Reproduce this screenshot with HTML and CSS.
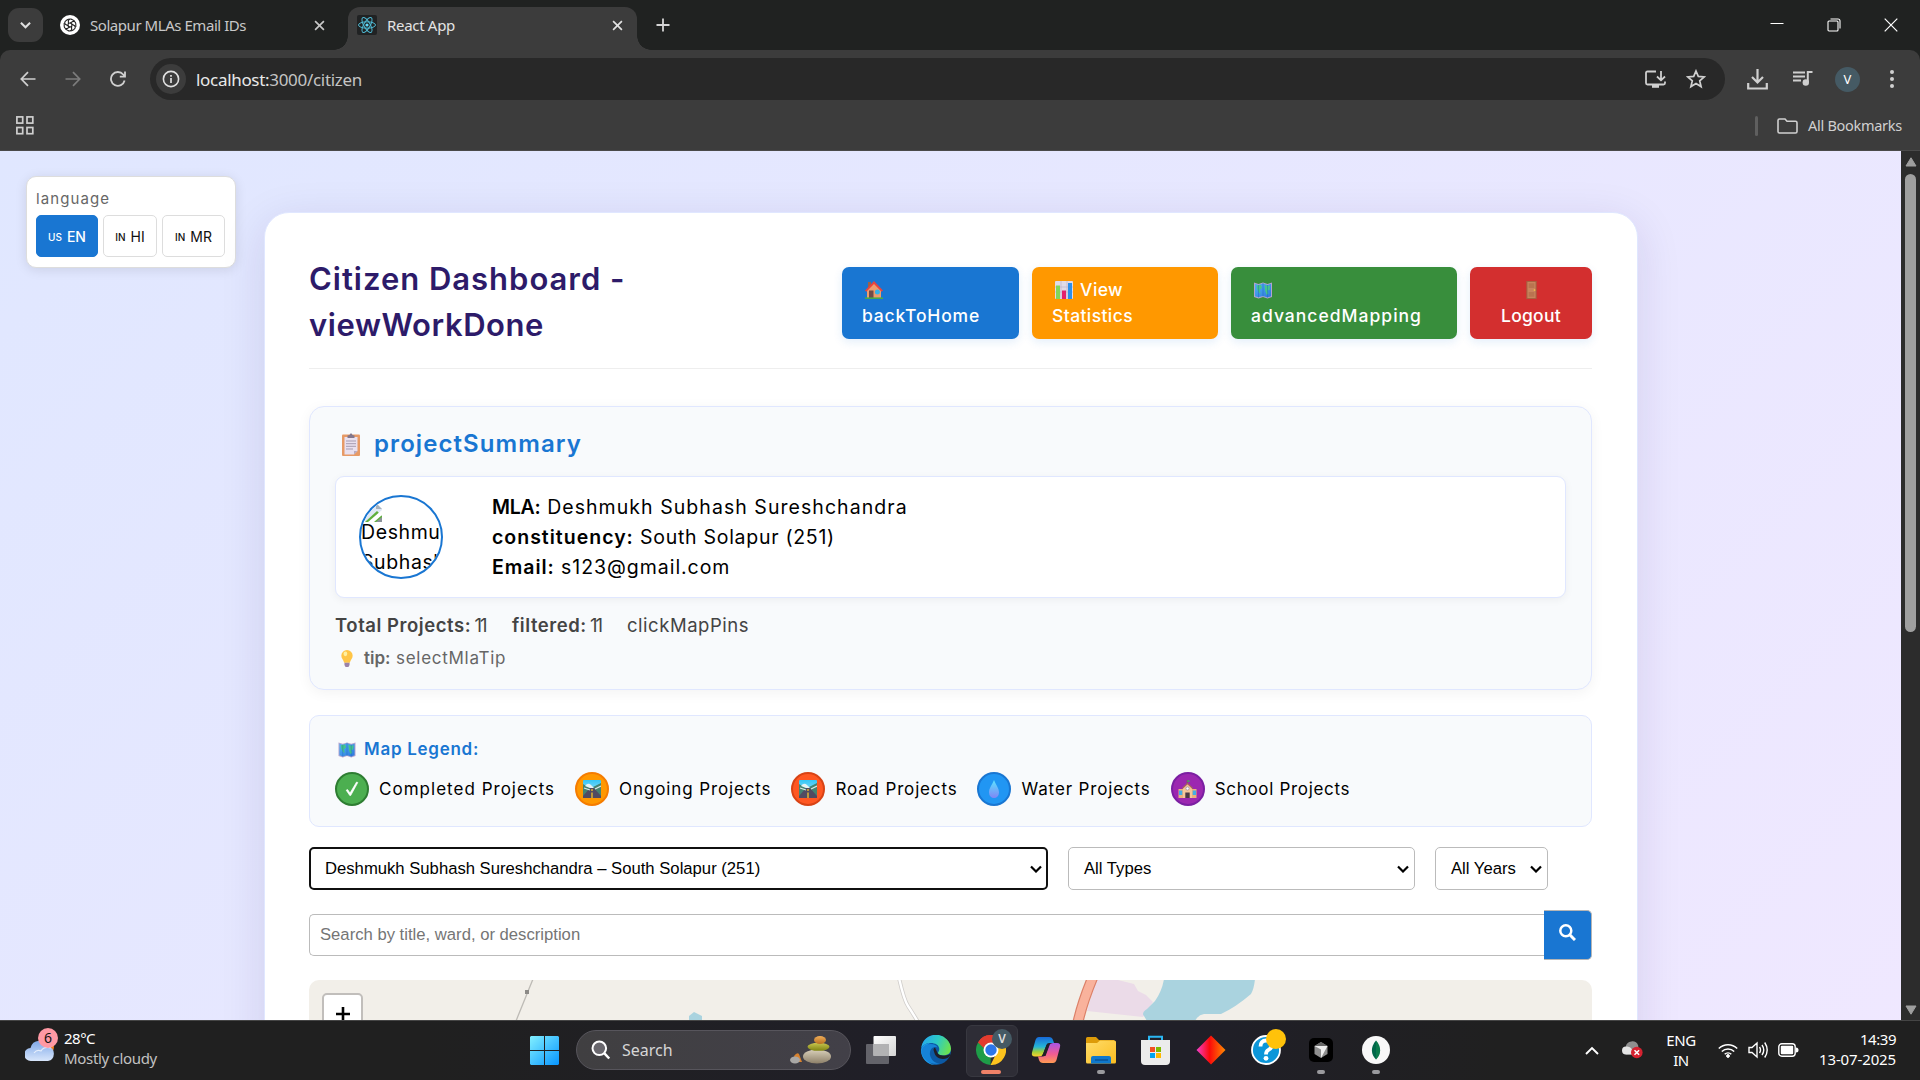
FILE: index.html
```html
<!DOCTYPE html>
<html lang="en">
<head>
<meta charset="utf-8">
<title>React App</title>
<link rel="stylesheet" href="styles.css">
</head>
<body>
<svg class="defs" width="0" height="0" aria-hidden="true">
  <defs>
    <linearGradient id="gDrop" x1="0" y1="0" x2="0" y2="1"><stop offset="0" stop-color="#5de4ff"/><stop offset="1" stop-color="#7f86f5"/></linearGradient>
    <linearGradient id="gMap" x1="0" y1="0" x2="1" y2="1"><stop offset="0" stop-color="#4fb2f5"/><stop offset="1" stop-color="#2f78dc"/></linearGradient>
    <linearGradient id="gSky" x1="0" y1="0" x2="0" y2="1"><stop offset="0" stop-color="#33c6f7"/><stop offset="1" stop-color="#bfeaf6"/></linearGradient>
    <symbol id="map" viewBox="0 0 18 18"><path d="M0 1.5 4.5 3 9 1.5 13.500 3 18 1.500V16l-4.500 1.500L9 16l-4.500 1.500L0 16z" fill="#b3a3cf"/><path d="M1 2.800 4.500 4 9 2.500 13.500 4 17 2.800V15.200l-3.500 1.200L9 15l-4.500 1.300L1 15.200z" fill="url(#gMap)"/><path d="M2.500 4.500 7 3.800 8 7 5.800 8.800 6.500 13 4.500 11 3 8z M10.500 4l3.200 1L16 4.500 15.500 9l-2 .5 1 3-1.800 1.500-1.500-4z" fill="#45c58b"/><path d="M9 2v13.500M4.500 4v12.500M13.500 4v12.500" stroke="#1e62b8" stroke-width=".7" opacity=".6"/></symbol>
    <symbol id="road" viewBox="0 0 18 18"><rect width="18" height="18" rx="1" fill="url(#gSky)"/><path d="M0 4l5 3 3 1 10-5v15H0z" fill="#448472"/><path d="M2 6q3-4 6-1l3 3H7z" fill="#e8f3f4"/><path d="M7 8h4l7 8v2H0v-2z" fill="#514b62"/><path d="M18 6l-6 3M1 8l6 2" stroke="#dbe9e7" stroke-width="1.200"/><path d="M9 9v2M9 12.500V18" stroke="#f6c22c" stroke-width="1.300"/></symbol>
    <symbol id="house" viewBox="0 0 18 19"><path d="M3 2h3v5H3z" fill="#9d6048"/><path d="M2 9.500 9 3l7 6.500V18H2z" fill="#ee9d6d"/><path d="M0 10.500 9 1l9 9.500-1.400 1.200L9 4 1.300 11.700z" fill="#e8443e"/><path d="M4 10.500h4.500V18H4z" fill="#714b48"/><circle cx="12.400" cy="12" r="2.500" fill="#35b2e9"/><path d="M0 17.400h18V19H0z" fill="#47a94a"/></symbol>
    <symbol id="chart" viewBox="0 0 18 18"><rect width="18" height="18" rx="1" fill="#e0dbe8"/><path d="M0 6h18M0 11h18M6 0v18M12 0v18" stroke="#bdb4cc" stroke-width=".7"/><path d="M1 4.500h4V18H1z" fill="#82d65a"/><path d="M7 9.500h4V18H7z" fill="#e4206d"/><path d="M13 2h4v16h-4z" fill="#2b8fec"/></symbol>
    <symbol id="door" viewBox="0 0 11 19"><path d="M0 0h11v19H0z" fill="#a76140"/><path d="M1.200 1h8.600v17H1.200z" fill="#c8845d"/><path d="M2.500 2.500h6v5h-6zM2.500 11.500h6v5h-6z" fill="#b97450"/><circle cx="8.700" cy="9.500" r=".9" fill="#fac844"/></symbol>
    <symbol id="clip" viewBox="0 0 18 23"><rect y="1.500" width="18" height="21.500" rx="1" fill="#e79a66"/><path d="M2.500 4h13v14l-3.500 3.500H2.500z" fill="#e9e0ef"/><path d="M15.500 18l-3.500 3.500V18z" fill="#b9aabf"/><path d="M5.500 5V2.500L7.500 2Q9-1.500 10.500 2l2 .5V5z" fill="#83778c"/><path d="M4 8h10M4 10.700h10M4 13.300h10M4 16h7" stroke="#a59bb0" stroke-width="1"/></symbol>
    <symbol id="bulb" viewBox="0 0 12 18"><path d="M6 0a6 6 0 0 1 6 6c0 3-2.500 4.500-3 7.500H3C2.500 10.500 0 9 0 6a6 6 0 0 1 6-6z" fill="#ffc546"/><ellipse cx="4.300" cy="4" rx="2" ry="2.500" fill="#fff0a0"/><path d="M3.300 13.500h5.400V16L7.500 18h-3L3.300 16z" fill="#9b82a8"/></symbol>
    <symbol id="school" viewBox="0 0 18 18"><path d="M8.700 0v5" stroke="#8a5b4d"/><path d="M9 0l3 1-3 1.300z" fill="#36b35c"/><path d="M0 9h18v9H0z" fill="#ecb07c"/><path d="M4.500 8 9 4l4.500 4v10h-9z" fill="#f6c699"/><path d="M3.800 8.500 9 3.500l5.200 5" fill="none" stroke="#a7665b" stroke-width="1.100"/><circle cx="9" cy="8.500" r="1.600" fill="#fff" stroke="#7e80a0" stroke-width=".6"/><path d="M.5 10.500h3.300V15H.5zM14.200 10.500h3.300V15h-3.300z" fill="#46aee4"/><path d="M6.800 12.500h4.400V18H6.800z" fill="#4d3944"/></symbol>
    <symbol id="drop" viewBox="0 0 10 18"><path d="M5 0c2 5 5 8 5 12.500a5 5.500 0 0 1-10 0C0 8 3 5 5 0z" fill="url(#gDrop)"/></symbol>
    <symbol id="chev" viewBox="0 0 12 8"><path d="M1 1.500 6 6.500 11 1.500" fill="none" stroke="currentColor" stroke-width="2.200"/></symbol>
    <symbol id="x" viewBox="0 0 12 12"><path d="M1.200 1.200 10.800 10.800M10.800 1.200 1.200 10.800" fill="none" stroke="currentColor" stroke-width="1.800"/></symbol>
  </defs>
</svg>

<div class="screen">
  <header class="tabstrip">
    <div class="tabsearch"><svg width="11" height="8"><use href="#chev"/></svg></div>
    <div class="tab tab-idle">
      <svg class="favicon" width="20" height="20" viewBox="0 0 20 20"><circle cx="10" cy="10" r="10" fill="#fff"/><g fill="none" stroke="#222" stroke-width="1.100"><path id="pet" d="M10 8.200 13 6.400Q15.500 6 15.800 8.800V12"/><use href="#pet" transform="rotate(60 10 10)"/><use href="#pet" transform="rotate(120 10 10)"/><use href="#pet" transform="rotate(180 10 10)"/><use href="#pet" transform="rotate(240 10 10)"/><use href="#pet" transform="rotate(300 10 10)"/><circle cx="10" cy="10" r="2"/></g></svg>
      <span class="tabtext t-sol">Solapur MLAs Email IDs</span>
      <svg class="tabclose" width="11" height="11"><use href="#x"/></svg>
    </div>
    <div class="tab tab-active">
      <svg class="favicon" width="20" height="20" viewBox="0 0 20 20"><rect width="20" height="20" rx="2" fill="#202223"/><g fill="none" stroke="#4fb9d3" stroke-width="1"><ellipse cx="10" cy="10" rx="8.500" ry="3.200"/><ellipse cx="10" cy="10" rx="8.500" ry="3.200" transform="rotate(60 10 10)"/><ellipse cx="10" cy="10" rx="8.500" ry="3.200" transform="rotate(120 10 10)"/></g><circle cx="10" cy="10" r="1.600" fill="#61dafb"/></svg>
      <span class="tabtext t-react">React App</span>
      <svg class="tabclose" width="11" height="11"><use href="#x"/></svg>
    </div>
    <svg class="newtab" width="14" height="14" viewBox="0 0 14 14"><path d="M7 .5v13M.5 7h13" stroke="#d5d5d5" stroke-width="1.800"/></svg>
    <div class="winbtns">
      <svg width="14" height="14" viewBox="0 0 14 14"><path d="M.5 5.500h13" stroke="#fff" stroke-width="1"/></svg>
      <svg width="14" height="14" viewBox="0 0 14 14" fill="none" stroke="#fff" stroke-width="1.100"><rect x="1" y="3" width="10" height="10" rx="1"/><path d="M3.500 1h7.500q2 0 2 2v7.500"/></svg>
      <svg width="14" height="14" viewBox="0 0 14 14"><path d="M.7 .7l12.600 12.600M13.300 .7.7 13.300" stroke="#fff" stroke-width="1.200"/></svg>
    </div>
  </header>

  <nav class="toolbar">
    <svg class="nav" width="16" height="16" viewBox="0 0 16 16" fill="none" stroke="#d0d0d0" stroke-width="1.700"><path d="M15.500 8H1.500M8 1.200 1.300 8 8 14.800"/></svg>
    <svg class="nav" width="16" height="16" viewBox="0 0 16 16" fill="none" stroke="#7c7c7c" stroke-width="1.700"><path d="M.5 8h14M8 1.200 14.700 8 8 14.800"/></svg>
    <svg class="nav" width="16" height="16" viewBox="0 0 16 16" fill="none" stroke="#d0d0d0" stroke-width="1.800"><path d="M14.600 9.500A6.900 6.900 0 1 1 13.200 3.500L14.500 5M15 .5v5.200H9.800"/></svg>
    <div class="omnibox">
      <span class="info"><svg width="18" height="18" viewBox="0 0 18 18"><circle cx="9" cy="9" r="7.600" fill="none" stroke="#e0e0e0" stroke-width="1.600"/><path d="M9 8v5M9 5v1.800" stroke="#e0e0e0" stroke-width="1.700"/></svg></span>
      <span class="url"><b>localhost:</b>3000/citizen</span>
      <svg class="install" width="21" height="19" viewBox="0 0 21 19" fill="none" stroke="#cfcfcf" stroke-width="1.800"><path d="M11 1.500H2.500q-1.500 0-1.500 1.500V13q0 1.500 1.500 1.500h16q1.500 0 1.500-1.500v-1.500M16 1v9M12 6.500l4 3.800 4-3.800"/><path d="M7 16.300h7" stroke-width="3"/></svg>
      <svg width="20" height="20" viewBox="0 0 20 20"><path d="M10 2l2.300 5.400 5.900.5-4.500 3.900 1.400 5.800L10 14.500l-5.100 3.100 1.400-5.800L1.800 7.900l5.900-.5z" fill="none" stroke="#d0d0d0" stroke-width="1.700"/></svg>
    </div>
    <svg class="dl" width="21" height="21" viewBox="0 0 21 21" fill="none" stroke="#d0d0d0" stroke-width="2.200"><path d="M10.500 0v13M5 8l5.500 5.500L16 8M1.200 14v5.500h18.600V14"/></svg>
    <svg class="music" width="20" height="18" viewBox="0 0 20 18"><path d="M0 2.500h12M0 6.500h12M0 10.500h8" stroke="#cfcfcf" stroke-width="1.800"/><path d="M14.800 12V2h4.700" fill="none" stroke="#cfcfcf" stroke-width="2"/><circle cx="12.800" cy="12.500" r="3.200" fill="#cfcfcf"/></svg>
    <span class="profile">V</span>
    <svg class="kebab" width="4" height="18" viewBox="0 0 4 18" fill="#d0d0d0"><circle cx="2" cy="2" r="2"/><circle cx="2" cy="9" r="2"/><circle cx="2" cy="16" r="2"/></svg>
  </nav>

  <div class="bookmarks">
    <svg width="18" height="19" viewBox="0 0 18 19" fill="none" stroke="#cfcfcf" stroke-width="1.700"><rect x=".9" y=".9" width="5.800" height="6.200"/><rect x="11" y=".9" width="5.800" height="6.200"/><rect x=".9" y="11.500" width="5.800" height="6.200"/><rect x="11" y="11.500" width="5.800" height="6.200"/></svg>
    <i class="bm-sep"></i>
    <svg class="folder" width="21" height="16" viewBox="0 0 21 16" fill="none" stroke="#cfcfcf" stroke-width="1.600"><path d="M2.500 1H8l2 2.200h8.500q1.500 0 1.500 1.500v8.800q0 1.500-1.500 1.500h-16Q1 15 1 13.500v-11Q1 1 2.500 1z"/></svg>
    <span class="bm-text">All Bookmarks</span>
  </div>

  <div class="viewport">
    <main class="page">
      <aside class="lang">
        <div class="lang-title">language</div>
        <div class="lang-row">
          <div class="lb lb-en"><small>US</small> EN</div>
          <div class="lb lb-hi"><small>IN</small> HI</div>
          <div class="lb lb-mr"><small>IN</small> MR</div>
        </div>
      </aside>

      <section class="container">
        <div class="head">
          <h1><span class="h-a">Citizen Dashboard -</span><br><span class="h-b">viewWorkDone</span></h1>
          <div class="actions">
            <div class="btn btn-home"><svg width="18" height="19"><use href="#house"/></svg><br>backToHome</div>
            <div class="btn btn-stats"><svg width="18" height="18"><use href="#chart"/></svg> <span class="t-view">View</span><br>Statistics</div>
            <div class="btn btn-map"><svg width="18" height="18"><use href="#map"/></svg><br>advancedMapping</div>
            <div class="btn btn-out"><svg width="11" height="18"><use href="#door"/></svg><br>Logout</div>
          </div>
        </div>

        <div class="summary">
          <h2><svg width="20" height="23"><use href="#clip"/></svg>projectSummary</h2>
          <div class="mla">
            <div class="photo">
              <svg width="18" height="20" viewBox="0 0 18 20"><path d="M0 0h11l6 6v13H0z" fill="#dfe8f4"/><path d="M11 0v6h6z" fill="#a9b3bd"/><path d="M0 19 12 8l5 5v6z" fill="#5faf3b"/><path d="M3 19 17 7v5L9 19z" fill="#fff"/><path d="M11 19l6-5v5z" fill="#8b9299"/></svg>
              <span>Deshmukh Subhash</span>
            </div>
            <div class="mla-info">
              <div class="m1"><b>MLA:</b> Deshmukh Subhash Sureshchandra</div>
              <div class="m2"><b>constituency:</b> South Solapur (251)</div>
              <div class="m3"><b>Email:</b> s123@gmail.com</div>
            </div>
          </div>
          <div class="totals"><span class="s1"><b>Total Projects:</b> <em>11</em></span><span class="s2"><b>filtered:</b> <em>11</em></span><span class="s3">clickMapPins</span></div>
          <div class="tip"><svg width="12" height="17"><use href="#bulb"/></svg><span><b>tip:</b> selectMlaTip</span></div>
        </div>

        <div class="legend">
          <h3><svg width="18" height="17"><use href="#map"/></svg>Map Legend:</h3>
          <div class="legend-row">
            <div class="li l1"><i class="dot done"><svg width="14" height="16" viewBox="0 0 14 16"><path d="M1.200 9.200 2.600 8.600l2.400 3.500L11.600 1l1.200.5L5.700 14.500H4.800z" fill="#fff" stroke="#fff" stroke-width=".7"/></svg></i><span>Completed Projects</span></div>
            <div class="li l2"><i class="dot ongoing"><svg width="18" height="18"><use href="#road"/></svg></i><span>Ongoing Projects</span></div>
            <div class="li l3"><i class="dot roadp"><svg width="18" height="18"><use href="#road"/></svg></i><span>Road Projects</span></div>
            <div class="li l4"><i class="dot water"><svg width="14" height="18"><use href="#drop"/></svg></i><span>Water Projects</span></div>
            <div class="li l5"><i class="dot school"><svg width="19" height="18"><use href="#school"/></svg></i><span>School Projects</span></div>
          </div>
        </div>

        <div class="filters">
          <div class="select sel-mla"><span>Deshmukh Subhash Sureshchandra – South Solapur (251)</span><svg width="12" height="8"><use href="#chev"/></svg></div>
          <div class="select sel-type"><span>All Types</span><svg width="12" height="8"><use href="#chev"/></svg></div>
          <div class="select sel-year"><span>All Years</span><svg width="12" height="8"><use href="#chev"/></svg></div>
        </div>

        <div class="searchbar">
          <div class="search-input">Search by title, ward, or description</div>
          <div class="search-btn"><svg width="17" height="17" viewBox="0 0 17 17" fill="none" stroke="#fff"><circle cx="6.800" cy="6.800" r="5.500" stroke-width="2.500"/><path d="M11 11l5 5" stroke-width="3"/></svg></div>
        </div>

        <div class="map">
          <svg width="1283" height="40" viewBox="309 980 1283 40">
            <path d="M533 979 516 1021" stroke="#bdbab5" stroke-width="1.300"/><rect x="525" y="990" width="4" height="4" fill="#8c8a87"/>
            <path d="M689 1020v-4l5-4 8 4v4z" fill="#aad3df"/>
            <path d="M899 978q5 22 9 28 4 6 10 16" fill="none" stroke="#cfccca" stroke-width="4"/><path d="M899 978q5 22 9 28 4 6 10 16" fill="none" stroke="#fff" stroke-width="2.400"/>
            <path d="M1096 979l18 0 20 5 4 7 8 4 7 7-10 15-56-6z" fill="#ebdbe8"/>
            <path d="M1164 979q-2 12-9 22l-8 8q-6 4-3 7l3 5h48q3-6 9-7h17q15-7 30-20 3-5 4-15z" fill="#aad3df"/>
            <path d="M1092.500 978q-10 24-14.500 44" fill="none" stroke="#dc8068" stroke-width="11"/><path d="M1092.500 978q-10 24-14.500 44" fill="none" stroke="#f9b29c" stroke-width="8.600"/>
          </svg>
          <div class="zoomin"><svg width="14" height="14" viewBox="0 0 14 14"><path d="M7 0v14M0 7h14" stroke="#000" stroke-width="2.600"/></svg></div>
        </div>
      </section>
    </main>
    <div class="scroll">
      <svg width="12" height="10" viewBox="0 0 12 10"><path d="M6 .8 11 9H1z" fill="#9f9f9f" stroke="#9f9f9f" stroke-linejoin="round"/></svg>
      <i class="thumb"></i>
      <svg width="12" height="10" viewBox="0 0 12 10"><path d="M6 9.200 11 1H1z" fill="#9f9f9f" stroke="#9f9f9f" stroke-linejoin="round"/></svg>
    </div>
  </div>

  <footer class="taskbar">
    <div class="weather">
      <svg width="36" height="36" viewBox="0 0 36 36"><defs><linearGradient id="gCl" x1="0" y1="0" x2="0" y2="1"><stop offset="0" stop-color="#7fa8e8"/><stop offset="1" stop-color="#d8e6fb"/></linearGradient></defs><circle cx="21" cy="18" r="8" fill="#f6821f"/><path d="M7 33a6.500 6.500 0 0 1-.5-13 9.500 9.500 0 0 1 18-1.500A7.500 7.500 0 0 1 24 33z" transform="translate(-1 -1)" fill="url(#gCl)"/><path d="M9 24q3-4 7-2 3-5 10-3" fill="none" stroke="#f3f8ff" stroke-width="1.200" opacity=".8"/></svg>
      <span class="badge">6</span>
      <div class="w-text"><span class="w1">28°C</span><br><span class="w2">Mostly cloudy</span></div>
    </div>
    <div class="apps">
      <div class="slot"><svg width="29" height="29" viewBox="0 0 29 29"><defs><linearGradient id="gWin" gradientUnits="userSpaceOnUse" x1="0" y1="0" x2="29" y2="29"><stop offset="0" stop-color="#82f0ff"/><stop offset="1" stop-color="#0795ff"/></linearGradient></defs><path d="M1 0h13v14H0V1zM15 0h13l1 1v13H15zM0 15h14v14H1l-1-1zM15 15h14v13l-1 1H15z" fill="url(#gWin)"/></svg></div>
      <div class="tsearch">
        <svg width="20" height="20" viewBox="0 0 20 20" fill="none" stroke="#fff"><circle cx="8.300" cy="8.300" r="6.800" stroke-width="2" fill="#69676d"/><path d="M13.200 13.200l5 5.300" stroke-width="2.500"/></svg>
        <span>Search</span>
        <svg class="stones" width="42" height="28" viewBox="0 0 42 28"><defs><linearGradient id="gSt" x1="0" y1="0" x2="0" y2="1"><stop offset="0" stop-color="#d9d0ba"/><stop offset="1" stop-color="#8d8069"/></linearGradient><linearGradient id="gSt2" x1="0" y1="0" x2="0" y2="1"><stop offset="0" stop-color="#c9c64f"/><stop offset="1" stop-color="#7f8412"/></linearGradient><linearGradient id="gSt3" x1="0" y1="0" x2="0" y2="1"><stop offset="0" stop-color="#f0ad58"/><stop offset="1" stop-color="#b8701f"/></linearGradient></defs><ellipse cx="27" cy="20.500" rx="14" ry="7" fill="url(#gSt)"/><ellipse cx="28.500" cy="10.800" rx="11" ry="4" fill="url(#gSt2)"/><ellipse cx="30" cy="4" rx="6" ry="4" fill="url(#gSt3)"/><path d="M4 20q3-4 5-2l3 8H6z" fill="#d9822e"/><ellipse cx="5" cy="24" rx="5" ry="3.500" fill="#a9a8a6"/></svg>
      </div>
      <div class="slot"><svg width="30" height="30" viewBox="0 0 30 30"><defs><linearGradient id="gTv" x1="0" y1="0" x2="1" y2="1"><stop offset="0" stop-color="#fff"/><stop offset="1" stop-color="#d4d4d4"/></linearGradient></defs><rect y="9" width="23" height="20" rx="1" fill="#63636a"/><rect x="7.500" y="1" width="22.500" height="20" rx="1" fill="url(#gTv)"/><path d="M7.500 9H23v12H7.500z" fill="#b2b2b4"/></svg></div>
      <div class="slot"><svg width="30" height="30" viewBox="0 0 30 30"><defs><linearGradient id="gE1" x1="0" y1=".3" x2="1" y2=".6"><stop offset="0" stop-color="#26a7ef"/><stop offset=".5" stop-color="#2dcbc4"/><stop offset="1" stop-color="#6ee24c"/></linearGradient></defs><circle cx="15" cy="15" r="15" fill="#0c59a4"/><path d="M1 9.500A15 15 0 0 1 30 13.500c0 5-4 7-8 7-3.500 0-5-1.300-5-2.400 0-1 1.300-1.500 1.300-4C18.300 10 14 8 10 8 5 8 2 10 .2 13z" fill="url(#gE1)"/><path d="M0 15C1 10 5 8 10 8c-2 0-4 2-5.500 5C2 20 7 29 14 30 6 30 0 23 0 15z" fill="#1d9be8"/><path d="M12 12.500C9.500 14 8.500 17 9 20c1 5 5 8.500 10 8.300A15 15 0 0 1 .3 17C1 12 4 9 9.500 9c4 0 6 1.500 7 3.500-1-.8-3-.8-4.500 0z" fill="#1683d8"/><path d="M29 20.500q-1.500 2-2.500 2.500c-5 2-12 1-13.500-6.500-1-2-.3-3.500 1-4l2.700 5.800c.7 1.700 3 2.200 5.300 2.200 3 0 5-.5 7-1.500z" fill="#201f28"/></svg></div>
      <div class="slot active">
        <svg width="30" height="30" viewBox="0 0 30 30"><path d="M15 15 2 7.500A15 15 0 0 1 28 7.500z" fill="#ea4335"/><path d="M15 15 2 7.500A15 15 0 0 0 14.500 30z" fill="#1e9d48"/><path d="M28 7.500A15 15 0 0 1 14.500 30l6-12L15 8h13z" fill="#fcc31e"/><path d="M2 7.500 15 7.600V15l-6.500 3.500z" fill="#1e9d48"/><path d="M2 7.500A15 15 0 0 1 28 7.700H15Q9 8 8.300 13.500z" fill="#e33b2e"/><circle cx="15" cy="15" r="7.500" fill="#fff"/><circle cx="15" cy="15" r="5.700" fill="#2c76ea"/></svg>
        <span class="vbadge">V</span><i class="run on"></i>
      </div>
      <div class="slot"><svg width="30" height="28" viewBox="0 0 30 28"><defs><linearGradient id="gC1" x1="0" y1="0" x2="0" y2="1"><stop offset="0" stop-color="#1769d9"/><stop offset=".5" stop-color="#25b5d8"/><stop offset=".75" stop-color="#9bcf3f"/><stop offset="1" stop-color="#ffd02b"/></linearGradient><linearGradient id="gC2" x1="0" y1="0" x2="0" y2="1"><stop offset="0" stop-color="#a955e6"/><stop offset=".55" stop-color="#f15b93"/><stop offset="1" stop-color="#ff9a52"/></linearGradient></defs><path d="M8 1h10q3 0 4 3l1 3h-5q-2 0-2.700 2.200L12 18q-1 2.500-4 2.500H4q-4 0-3-4L4.500 4Q5.500 1 8 1z" fill="url(#gC1)"/><path d="M22 27H12q-3 0-4-3l-1-3.500h5q2 0 2.700-2.200L18 9.500Q19 7 22 7h4q4 0 3 4l-3.500 13Q24.500 27 22 27z" fill="url(#gC2)"/><path d="M15.800 8.500h3L14.500 20h-3.300z" fill="#211f28"/></svg></div>
      <div class="slot"><svg width="30" height="30" viewBox="0 0 30 30"><defs><linearGradient id="gF" x1="0" y1="0" x2="1" y2="1"><stop offset="0" stop-color="#ffdc6a"/><stop offset="1" stop-color="#fbbd20"/></linearGradient></defs><path d="M0 3.500Q0 2 1.500 2H10l3 3h15l1 2v6H0z" fill="#dd9b09"/><path d="M0 8h11l3-2.500h14.500Q30 5.500 30 7v20q0 1.500-1.500 1.500h-27Q0 28.500 0 27z" fill="url(#gF)"/><path d="M5 28.500V23q0-2 2-2h16q2 0 2 2v5.500z" fill="#0f78cc"/><path d="M9 25h13" stroke="#074b8b" stroke-width="1.200"/></svg><i class="run"></i></div>
      <div class="slot"><svg width="29" height="30" viewBox="0 0 29 30"><path d="M8 6V1.700h13V6" fill="none" stroke="#2ab6f2" stroke-width="2"/><path d="M0 5h29v21q0 4-4 4H4q-4 0-4-4z" fill="#ececec"/><path d="M9 12h5v5H9z" fill="#f25022"/><path d="M15 12h5v5h-5z" fill="#7fba00"/><path d="M9 18h5v5H9z" fill="#00a4ef"/><path d="M15 18h5v5h-5z" fill="#ffb900"/></svg></div>
      <div class="slot"><svg width="30" height="30" viewBox="0 0 30 30"><defs><linearGradient id="gD"><stop offset="0" stop-color="#f43fcb"/><stop offset=".45" stop-color="#fb0a0a"/><stop offset="1" stop-color="#ff8a00"/></linearGradient></defs><path d="M15 .5 29.500 15 15 29.500.5 15z" fill="url(#gD)"/></svg></div>
      <div class="slot"><svg width="30" height="30" viewBox="0 0 30 30"><circle cx="15" cy="15" r="14" fill="#0c96d9" stroke="#fff" stroke-width="1.800"/><path d="M9.500 11.500q0-6 5.700-6 5.500 0 5.500 4.700 0 3-3.200 4.700-2.500 1.300-2.500 4.600" fill="none" stroke="#fff" stroke-width="3.800"/><circle cx="15" cy="23.300" r="2.400" fill="#fff"/></svg><i class="ybadge"></i></div>
      <div class="slot"><svg width="24" height="24" viewBox="0 0 24 24"><rect width="24" height="24" rx="5" fill="#000"/><path d="M12 4 18.500 7.900v8.200L12 20 5.500 16.100V7.900z" fill="#8e8e8e"/><path d="M5.500 7.900h13L12 20v-8.500z" fill="#eee"/><path d="M12 4l6.500 3.900h-13z" fill="#666"/></svg><i class="run"></i></div>
      <div class="slot"><svg width="28" height="28" viewBox="0 0 28 28"><circle cx="14" cy="14" r="14" fill="#f8f8f8"/><path d="M14 4.500c6 7 5 14 0 19-5-5-6-12 0-19z" fill="#00684a"/><path d="M14 4.500c6 7 5 14 0 19z" fill="#118d4d" opacity=".5"/></svg><i class="run"></i></div>
    </div>
    <div class="tray">
      <svg width="14" height="9" viewBox="0 0 14 9"><path d="M1 8l6-6 6 6" fill="none" stroke="#fff" stroke-width="1.900"/></svg>
      <svg class="od" width="21" height="18" viewBox="0 0 21 18"><path d="M4 13.500a4 4 0 0 1-.3-7.500 6.500 6.500 0 0 1 12.500-1.500L17 13z" fill="#8f8f8f"/><path d="M4 13.500A4 4 0 0 1 4 5.500q3-.5 5 1.500l4 6.500z" fill="#e4e4e4"/><circle cx="14.800" cy="11.500" r="5.800" fill="#d62230"/><path d="M12.500 9.200l4.600 4.600M17.100 9.200l-4.600 4.600" stroke="#fff" stroke-width="1.500"/></svg>
      <div class="eng">ENG<br>IN</div>
      <svg class="wifi" width="20" height="16" viewBox="0 0 20 16" fill="none" stroke="#fff" stroke-width="1.500"><path d="M.8 6.500a13 13 0 0 1 18.400 0M3.800 9.500a8.800 8.800 0 0 1 12.400 0M6.700 12.300a4.800 4.800 0 0 1 6.600 0"/><circle cx="10" cy="14" r="1.400" fill="#fff" stroke-width="1"/></svg>
      <svg class="spk" width="21" height="18" viewBox="0 0 21 18" fill="none" stroke="#fff" stroke-width="1.400"><path d="M1 6.500h3L9 2v14l-5-4.500H1zM11.500 6q2 3 0 6M14 4q3.500 5 0 10M16.700 1.500q5 7.500 0 15"/></svg>
      <svg class="bat" width="21" height="14" viewBox="0 0 21 14"><rect x=".8" y=".8" width="16.400" height="12.400" rx="3" fill="none" stroke="#fff" stroke-width="1.400"/><rect x="2.800" y="2.800" width="12.400" height="8.400" rx="1" fill="#fff"/><path d="M18 4.500q2.500 0 2.500 2.500T18 9.500z" fill="#fff"/></svg>
      <div class="clock"><span class="c1">14:39</span><br><span class="c2">13-07-2025</span></div>
    </div>
  </footer>
</div>
</body>
</html>
```
FILE: styles.css
```css
* { box-sizing: border-box; }
body { margin: 0; background: #202221; overflow: hidden; }
svg { display: block; flex: none; }
.defs { position: absolute; }
.screen { width: 1920px; height: 1080px; display: flex; flex-direction: column; overflow: hidden; font-family: "Noto Sans", "Open Sans", sans-serif; }

/* browser tab strip */
.tabstrip { height: 50px; flex: none; background: #202221; display: flex; align-items: center; padding-left: 8px; color: #c8c8c8; }
.tabsearch { width: 35px; height: 34px; border-radius: 11px; background: #3c3c3c; color: #e0e0e0; display: flex; align-items: center; justify-content: center; }
.tab { display: flex; align-items: center; font-size: 15px; }
.tab-idle { width: 305px; padding: 0 23px 0 17px; }
.tab-active { position: relative; width: 289px; height: 43px; align-self: flex-end; background: #3c3c3c; border-radius: 12px 12px 0 0; padding: 0 14px 7px 9px; color: #e3e3e3; }
.tab-active::before, .tab-active::after { content: ""; position: absolute; bottom: 0; width: 14px; height: 14px; }
.tab-active::before { left: -14px; background: radial-gradient(circle at 0 0, transparent 13.5px, #3c3c3c 14px); }
.tab-active::after { right: -14px; background: radial-gradient(circle at 100% 0, transparent 13.5px, #3c3c3c 14px); }
.tabtext { margin-left: 10px; white-space: nowrap; }
.t-sol { letter-spacing: -.45px; }
.t-react { letter-spacing: -.31px; }
.tabclose { margin-left: auto; }
.newtab { margin-left: 19px; }
.winbtns { margin-left: auto; display: flex; gap: 43px; padding-right: 22px; }

/* address bar */
.toolbar { height: 58px; flex: none; background: #3c3c3c; border-radius: 10px 10px 0 0; display: flex; align-items: center; padding-left: 20px; }
.nav { margin-right: 29px; }
.omnibox { width: 1575px; height: 42px; border-radius: 21px; background: #282828; display: flex; align-items: center; padding: 0 19px 0 6px; margin-left: -5px; flex: none; }
.info { width: 30px; height: 30px; border-radius: 50%; background: #3c3c3c; display: flex; align-items: center; justify-content: center; }
.url { margin-left: 10px; font-size: 17px; letter-spacing: -.31px; color: #c4c4c4; white-space: nowrap; }
.url b { font-weight: 400; color: #e8e8e8; }
.install { margin-left: auto; margin-right: 20px; }
.dl { margin-left: 22px; }
.music { margin-left: 25px; }
.profile { width: 25px; height: 25px; margin-left: 22px; border-radius: 50%; background: #455a64; color: #fff; font-size: 13px; line-height: 25px; text-align: center; }
.kebab { margin-left: 30px; }

.bookmarks { height: 43px; flex: none; background: #3c3c3c; border-bottom: 1px solid #4a4a4a; display: flex; align-items: center; padding: 0 0 7px 16px; }
.bm-sep { width: 3px; height: 20px; border-radius: 2px; background: #5f5f5f; margin-left: 1721px; flex: none; }
.folder { margin-left: 19px; }
.bm-text { margin: -2px 0 0 10px; font-size: 14.5px; letter-spacing: -.28px; color: #d0d0d0; white-space: nowrap; }

/* page */
.viewport { height: 869px; flex: none; display: flex; overflow: hidden; }
.page { width: 1901px; height: 869px; display: flex; align-items: flex-start; background: linear-gradient(135deg, #e0e7ff 0%, #f3e8ff 100%) 0 0 / 1901px 1560px no-repeat; font-family: Inter, "Noto Sans", sans-serif; overflow: hidden; }
.lang { width: 210px; height: 92px; margin: 25px 0 0 26px; border: 1px solid #ddd; border-radius: 10px; background: #fff; box-shadow: 0 2px 12px rgba(0,0,0,.1); padding: 8px 9px 0 9px; flex: none; }
.lang-title { height: 29px; line-height: 28px; font-size: 15px; letter-spacing: 1.08px; color: #666; }
.lang-row { display: flex; gap: 5px; margin-top: 1px; }
.lb { height: 42px; border: 1px solid #ddd; border-radius: 5px; font-size: 14px; display: flex; align-items: center; justify-content: center; gap: 5px; color: #111; }
.lb small { font-size: 10px; padding-top: 2px; font-weight: 500; }
.lb-en { width: 62px; background: #1976d2; border-color: #1976d2; color: #fff; font-weight: 500; }
.lb-hi { width: 54px; }
.lb-mr { width: 63px; }

.container { width: 1374px; height: 1300px; margin: 61px 0 0 28px; padding: 54px 45px 0 44px; background: #fff; border: 1px solid #e0e7ff; border-radius: 25px; box-shadow: 0 10px 45px rgba(45,27,105,.12); flex: none; }
.head { height: 102px; display: flex; justify-content: space-between; border-bottom: 1px solid #eee; }
h1, h2, h3 { margin: 0; font-weight: 600; }
h1 { font-size: 31px; line-height: 46px; color: #2d1b69; white-space: nowrap; margin-top: -11px; }
.h-a { letter-spacing: .98px; }
.h-b { letter-spacing: .57px; }
.actions { display: flex; gap: 13px; }
.btn { height: 72px; border-radius: 7px; color: #fff; font-size: 17.500px; line-height: 26px; font-weight: 500; padding: 10px 0 0 20px; white-space: nowrap; box-shadow: 0 3px 10px rgba(25,118,210,.12); }
.btn svg { display: inline-block; vertical-align: -3px; margin-left: 3px; }
.btn-home { width: 177px; background: #1976d2; letter-spacing: .81px; }
.btn-stats { width: 186px; background: #ff9800; letter-spacing: .4px; }
.btn-map { width: 226px; background: #388e3c; letter-spacing: 1.01px; }
.btn-out { width: 122px; background: #d32f2f; padding-left: 0; text-align: center; letter-spacing: .27px; }
.t-view { margin-left: 2px; }
.btn-out svg { margin-left: 0; }

.summary { height: 284px; margin-top: 37px; padding: 22px 25px 0; border: 1px solid #e0e7ff; border-radius: 15px; background: #f8fafc; box-shadow: 0 3px 14px rgba(0,0,0,.05); }
h2 { height: 30px; line-height: 30px; font-size: 24px; letter-spacing: 1.08px; color: #1976d2; display: flex; align-items: center; gap: 13px; padding-left: 6px; white-space: nowrap; }
.mla { height: 122px; margin-top: 17px; border: 1px solid #e0e7ff; border-radius: 9px; background: #fff; box-shadow: 0 2px 8px rgba(0,0,0,.05); display: flex; padding: 18px 0 0 23px; }
.photo { width: 84px; height: 84px; border: 2px solid #1976d2; border-radius: 50%; overflow: hidden; font-size: 19.500px; line-height: 30px; color: #000; padding-top: 6px; }
.photo svg { margin: 0 0 -6px 4px; }
.photo span { display: block; letter-spacing: .6px; }
.mla-info { margin-left: 49px; margin-top: -3px; font-size: 19.500px; line-height: 30px; color: #000; white-space: nowrap; }
.m1 { letter-spacing: 1.05px; }
.m1 b { letter-spacing: -.2px; }
.m2 { letter-spacing: .72px; }
.m2 b { letter-spacing: 1px; }
.m3 { letter-spacing: .95px; }
b { font-weight: 600; }
.totals { height: 30px; margin-top: 12px; line-height: 30px; font-size: 18.500px; color: #444; display: flex; white-space: nowrap; }
.totals b { letter-spacing: .55px; }
.totals em { font-style: normal; letter-spacing: -2px; margin-left: -2px; }
.s1 { width: 155px; margin-right: 22px; }
.s2 { width: 92px; margin-right: 23px; }
.s3 { letter-spacing: .53px; }
.tip { height: 30px; margin-top: 3px; line-height: 30px; font-size: 17px; letter-spacing: .72px; color: #666; display: flex; align-items: center; gap: 11px; padding-left: 6px; white-space: nowrap; }
.tip b { letter-spacing: 0; }

.legend { height: 112px; margin-top: 25px; padding: 20px 25px 0; border: 1px solid #e0e7ff; border-radius: 10px; background: #f8fafc; }
h3 { height: 26px; line-height: 26px; font-size: 17px; letter-spacing: .72px; color: #1976d2; display: flex; align-items: center; gap: 8px; padding-left: 3px; white-space: nowrap; }
.legend-row { display: flex; gap: 20px; margin-top: 10px; }
.li { display: flex; align-items: center; gap: 10px; font-size: 17px; color: #000; white-space: nowrap; }
.l1 { letter-spacing: 1.02px; }
.l2 { letter-spacing: .88px; }
.l3 { letter-spacing: .84px; }
.l4 { letter-spacing: .86px; }
.l5 { letter-spacing: .68px; }
.dot { width: 34px; height: 34px; border-radius: 50%; display: flex; align-items: center; justify-content: center; border: 2px solid; }
.done { background: #4caf50; border-color: #2e7d32; }
.ongoing { background: #ff9800; border-color: #f57c00; }
.roadp { background: #ff5722; border-color: #d84315; }
.water { background: #2196f3; border-color: #1976d2; }
.school { background: #9c27b0; border-color: #7b1fa2; }

.filters { display: flex; gap: 20px; margin-top: 20px; font-family: "Liberation Sans", Arial, sans-serif; }
.select { height: 43px; border: 1px solid #bbb; border-radius: 5px; background: #fff; color: #000; font-size: 16.670px; display: flex; align-items: center; justify-content: space-between; padding: 0 5px 0 15px; white-space: nowrap; }
.sel-mla { width: 739px; border: 2px solid #101010; padding: 0 4px 0 14px; }
.sel-type { width: 347px; }
.sel-year { width: 113px; }
.searchbar { height: 50px; display: flex; align-items: center; margin-top: 20px; font-family: "Liberation Sans", Arial, sans-serif; }
.search-input { width: 1235px; height: 42px; margin-top: -1px; border: 1px solid #bbb; border-right: 0; border-radius: 5px 0 0 5px; font-size: 16.670px; line-height: 39px; color: #757575; padding-left: 10px; }
.search-btn { width: 48px; height: 50px; background: #1976d2; border: 1px solid #b5b5b5; border-left: 0; border-radius: 0 5px 5px 0; padding: 13px 0 0 15px; }
.map { position: relative; height: 300px; margin-top: 20px; background: #f2efe9; border-radius: 10px; overflow: hidden; }
.zoomin { position: absolute; left: 13px; top: 13px; width: 41px; height: 41px; border: 2px solid #c1bebb; border-radius: 5px; background: #fff; padding: 12px 0 0 12px; }

.scroll { width: 19px; background: #2c2c2c; display: flex; flex-direction: column; align-items: center; padding: 6px 0 5px; }
.thumb { width: 11px; height: 458px; border-radius: 6px; background: #9f9f9f; margin: 7px 0 auto; }

/* taskbar */
.taskbar { height: 60px; flex: none; border-top: 1px solid #454545; background: linear-gradient(90deg, #202020 22%, #201f28 48%, #201f28 62%, #202020 78%); display: flex; color: #fff; font-size: 15px; }
.weather { position: relative; width: 517px; padding: 8px 0 0 25px; display: flex; }
.badge { position: absolute; left: 38px; top: 7px; width: 20px; height: 20px; border-radius: 50%; background: #ff99a4; color: #111; font-size: 14px; line-height: 20px; text-align: center; }
.w-text { margin: -1px 0 0 3px; line-height: 20px; white-space: nowrap; }
.w1 { letter-spacing: -.5px; }
.w2 { color: #c2c2c2; letter-spacing: -.31px; }
.apps { display: flex; align-items: center; height: 58px; }
.slot { position: relative; width: 55px; height: 58px; display: flex; align-items: center; justify-content: center; }
.active::before { content: ""; position: absolute; left: 2.500px; top: 4px; width: 50px; height: 50px; border: 1px solid #383840; border-radius: 6px; background: #2e2d36; }
.active svg { position: relative; }
.run { position: absolute; left: 23.500px; top: 49px; width: 8px; height: 4px; border-radius: 2px; background: #9a9a9e; }
.run.on { left: 17.500px; width: 20px; background: #f08268; }
.vbadge { position: absolute; left: 29px; top: 8px; width: 20px; height: 20px; border-radius: 50%; background: #455a64; color: #ddd; font-size: 12px; font-weight: 600; line-height: 20px; text-align: center; }
.ybadge { position: absolute; left: 28px; top: 8px; width: 20px; height: 20px; border-radius: 50%; background: #ffc20a; }
.tsearch { width: 275px; height: 40px; margin: 0 2px 0 4px; border: 1px solid #57555c; border-radius: 20px; background: linear-gradient(90deg, #403f41, #424048); display: flex; align-items: center; padding: 0 18px 0 14px; font-size: 16px; color: #d6d6d6; }
.tsearch span { margin-left: 11px; }
.stones { margin-left: auto; }
.tray { margin-left: auto; height: 58px; display: flex; align-items: center; padding-right: 24px; line-height: 20px; }
.od { margin-left: 23px; }
.eng { width: 40px; margin-left: 18px; text-align: center; letter-spacing: -.4px; }
.wifi { margin-left: 17px; }
.spk { margin-left: 10px; }
.bat { margin-left: 9px; }
.clock { width: 80px; margin: -2px 0 0 17px; text-align: right; white-space: nowrap; }
.c1 { letter-spacing: -.47px; }
.c2 { letter-spacing: -.13px; }
```
